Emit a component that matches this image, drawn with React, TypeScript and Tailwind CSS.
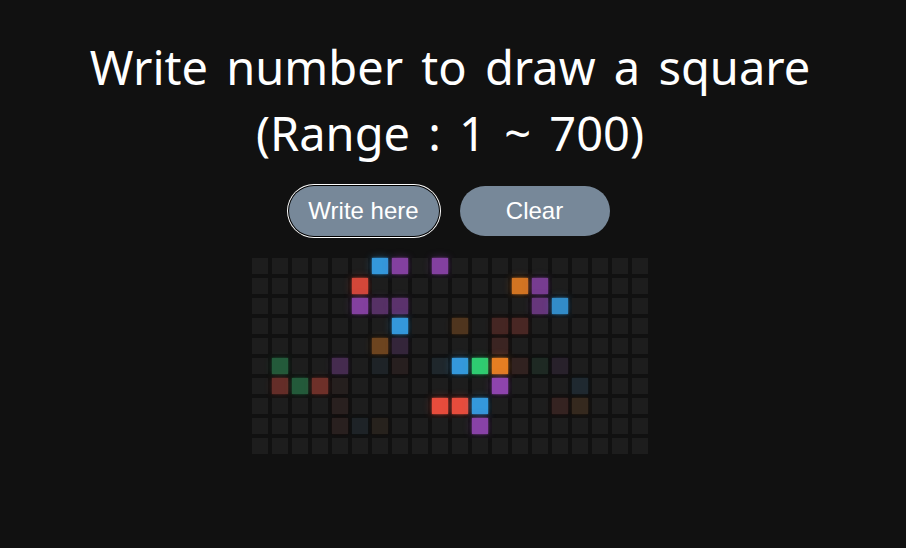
import React from 'react';

const COLORS: Record<string, string> = {
  b: '#3498db',
  p: '#8e44ad',
  r: '#e74c3c',
  o: '#e67e22',
  g: '#2ecc71',
};

// [row, col, colour, strength]
const LIT: [number, number, string, number][] = [
  [0, 6, 'b', 1], [0, 7, 'p', 0.9], [0, 9, 'p', 0.9],
  [1, 5, 'r', 0.9], [1, 13, 'o', 0.9], [1, 14, 'p', 0.8],
  [2, 5, 'p', 0.9], [2, 6, 'p', 0.5], [2, 7, 'p', 0.55], [2, 14, 'p', 0.65], [2, 15, 'b', 0.9],
  [3, 7, 'b', 1], [3, 10, 'o', 0.25], [3, 12, 'r', 0.2], [3, 13, 'r', 0.22],
  [4, 6, 'o', 0.4], [4, 7, 'p', 0.2], [4, 12, 'r', 0.15],
  [5, 1, 'g', 0.35], [5, 4, 'p', 0.35], [5, 6, 'b', 0.05], [5, 7, 'r', 0.05], [5, 9, 'b', 0.08],
  [5, 10, 'b', 1], [5, 11, 'g', 1], [5, 12, 'o', 1], [5, 13, 'r', 0.1], [5, 14, 'g', 0.07], [5, 15, 'p', 0.1],
  [6, 1, 'r', 0.35], [6, 2, 'g', 0.35], [6, 3, 'r', 0.4], [6, 4, 'r', 0.04], [6, 12, 'p', 1], [6, 16, 'b', 0.1],
  [7, 4, 'r', 0.06], [7, 9, 'r', 1], [7, 10, 'r', 1], [7, 11, 'b', 1], [7, 15, 'r', 0.12], [7, 16, 'o', 0.12],
  [8, 4, 'r', 0.06], [8, 5, 'b', 0.05], [8, 6, 'o', 0.05], [8, 11, 'p', 0.95],
];

const BASE = [0x1d, 0x1d, 0x1d];

function mix(hex: string, t: number) {
  const c = [1, 3, 5].map((i) => parseInt(hex.slice(i, i + 2), 16));
  const m = c.map((v, i) => Math.round(BASE[i] + (v - BASE[i]) * t));
  return `rgb(${m[0]}, ${m[1]}, ${m[2]})`;
}

function alpha(hex: string, a: number) {
  const c = [1, 3, 5].map((i) => parseInt(hex.slice(i, i + 2), 16));
  return `rgba(${c[0]}, ${c[1]}, ${c[2]}, ${a})`;
}

const App: React.FC = () => {
  const lit = new Map<string, [string, number]>();
  LIT.forEach(([r, c, k, s]) => lit.set(`${r}-${c}`, [COLORS[k], s]));

  const cells = [];
  for (let r = 0; r < 10; r++) {
    for (let c = 0; c < 20; c++) {
      const hit = lit.get(`${r}-${c}`);
      const style = hit
        ? {
            backgroundColor: mix(hit[0], hit[1]),
            boxShadow: `0 0 2px ${alpha(hit[0], hit[1] * 0.9)}, 0 0 8px ${alpha(hit[0], hit[1] * 0.45)}`,
          }
        : undefined;
      cells.push(<div key={`${r}-${c}`} className="w-4 h-4 bg-[#1d1d1d]" style={style} />);
    }
  }

  return (
    <div className="min-h-screen w-full bg-[#111111] text-white flex flex-col items-center pr-[6px] pt-[34px]">
      <h1 className="text-[47px] leading-[66px] [word-spacing:6px] text-center font-['Noto_Sans',sans-serif] font-normal">
        Write number to draw a square
        <br />
        (Range : 1 ~ 700)
      </h1>

      <div className="flex gap-[21px] mt-[20px] -translate-x-px">
        <button className="w-[150px] h-[50px] rounded-full bg-[#778899] text-white text-[24px] font-['Liberation_Sans',Arial,sans-serif] ring-1 ring-white ring-offset-1 ring-offset-black">
          Write here
        </button>
        <button className="w-[150px] h-[50px] rounded-full bg-[#778899] text-white text-[24px] font-['Liberation_Sans',Arial,sans-serif]">
          Clear
        </button>
      </div>

      <div className="grid grid-cols-[repeat(20,16px)] gap-[4px] mt-[22px]">{cells}</div>
    </div>
  );
};

export default App;
